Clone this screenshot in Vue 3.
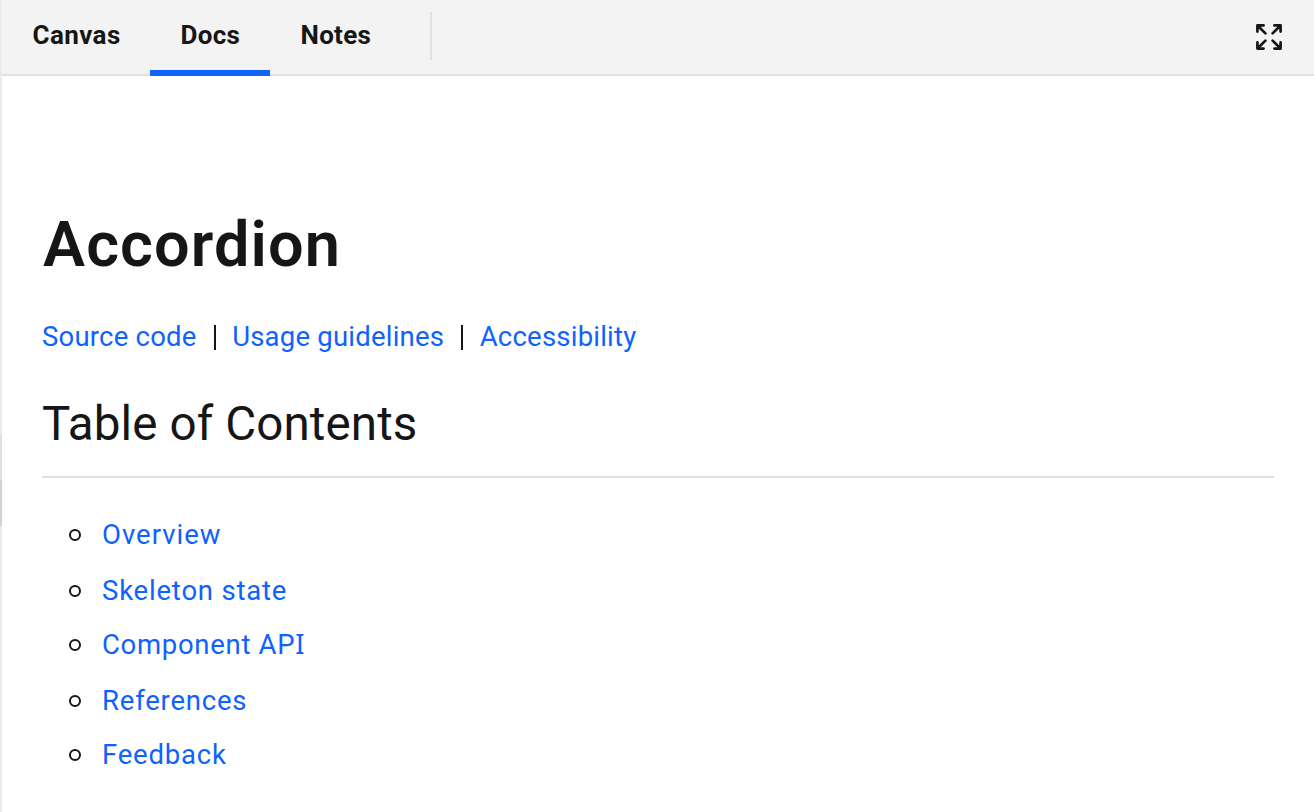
<script setup>
const tabs = [
  { label: 'Canvas', cls: 't-canvas' },
  { label: 'Docs', cls: 't-docs', active: true },
  { label: 'Notes', cls: 't-notes' },
]
const contents = [
  { label: 'Overview', cls: 'c-over' },
  { label: 'Skeleton state', cls: 'c-skel' },
  { label: 'Component AP', tail: 'I', cls: 'c-api' },
  { label: 'References', cls: 'c-ref' },
  { label: 'Feedback', cls: 'c-feed' },
]
</script>

<template>
  <div class="page">
    <div class="edge"><i class="e1"></i><i class="e2"></i></div>
    <div class="main">
      <header class="bar">
        <nav class="tabs">
          <a v-for="t in tabs" :key="t.label" class="tab" :class="{ active: t.active }"><span :class="t.cls">{{ t.label }}</span></a>
        </nav>
        <span class="divider"></span>
        <svg class="expand" width="26" height="26" viewBox="0 0 26 26" fill="none" stroke="#161616" stroke-width="2.7" stroke-linecap="round" stroke-linejoin="round">
          <path d="M1.4 7.6V1.4H7.6M2 2L9.4 9.4M18.4 1.4H24.6V7.6M24 2L16.6 9.4M1.4 18.4V24.6H7.6M2 24L9.4 16.6M18.4 24.6H24.6V18.4M24 24L16.6 16.6" />
        </svg>
      </header>
      <main class="doc">
        <h1>Accordion</h1>
        <p class="links"><a>Source code</a><span class="sep"></span><a>Usage guidelines</a><span class="sep"></span><a>Accessibility</a></p>
        <h2>Table of Contents</h2>
        <ul>
          <li v-for="c in contents" :key="c.label"><i class="dot"></i><a :class="c.cls">{{ c.label }}<span v-if="c.tail" class="slab">{{ c.tail }}</span></a></li>
        </ul>
      </main>
    </div>
  </div>
</template>

<style>
body { margin: 0; background: #fff; overflow: hidden; }
</style>

<style scoped>
* { box-sizing: border-box; }
.page { width: 1314px; height: 812px; display: flex; font-family: Roboto, "Noto Sans", sans-serif; color: #161616; background: #fff; }
.edge { width: 2px; background: #ebebeb; padding-top: 434px; flex: none; }
.edge i { display: block; height: 46px; background: #e0e0e0; }
.edge .e2 { background: #d2d2d2; }
.main { flex: 1; min-width: 0; }
.bar { height: 76px; background: #f3f3f3; border-bottom: 2px solid #e0e0e0; display: flex; align-items: flex-start; }
.tabs { display: flex; }
.tab { height: 76px; padding: 0 0 0 30.5px; line-height: 70px; font-size: 26px; font-weight: 700; border-bottom: 6px solid transparent; white-space: nowrap; color: #161616; letter-spacing: 0.3px; }
.t-canvas { letter-spacing: 0.4px; }
.tab:nth-child(1) { width: 148px; }
.tab:nth-child(2) { width: 120px; }
.tab:nth-child(3) { width: 160px; }
.tab.active { border-color: #0f62fe; }
.divider { width: 2px; height: 48px; margin-top: 12px; background: #e0e0e0; }
.expand { display: block; margin: 24px 32px 0 auto; }
.doc { padding: 124px 40px 0; }
h1 { margin: 0 0 0 1px; height: 88px; line-height: 90px; font-size: 63px; font-weight: 600; letter-spacing: 1.1px; white-space: nowrap; }
.links { margin: 28px 0 0; height: 42px; line-height: 42px; font-size: 27.5px; font-weight: 400; letter-spacing: 0.22px; display: flex; align-items: center; white-space: nowrap; }
.links a, li a { color: #0f62fe; }
.sep { width: 2px; height: 25px; background: #161616; margin: 0 16.5px 0 17px; }
h2 { margin: 30px 0 0; height: 90px; line-height: 73px; font-size: 47.5px; font-weight: 400; letter-spacing: 0.12px; border-bottom: 2px solid #e0e0e0; white-space: nowrap; }
ul { margin: 29px 0 0; padding: 0 0 0 27px; list-style: none; }
li { height: 55px; line-height: 55px; display: flex; align-items: center; font-size: 27.5px; font-weight: 400; letter-spacing: 0.8px; white-space: nowrap; }
li:nth-child(even) { padding-top: 2px; }
.c-over { letter-spacing: 1px; }
.c-api { letter-spacing: 0.7px; }
.slab { font-family: "Noto Sans", sans-serif; line-height: 1; }
.dot { width: 12px; height: 12px; border: 2px solid #161616; border-radius: 50%; margin-right: 21px; }
</style>
